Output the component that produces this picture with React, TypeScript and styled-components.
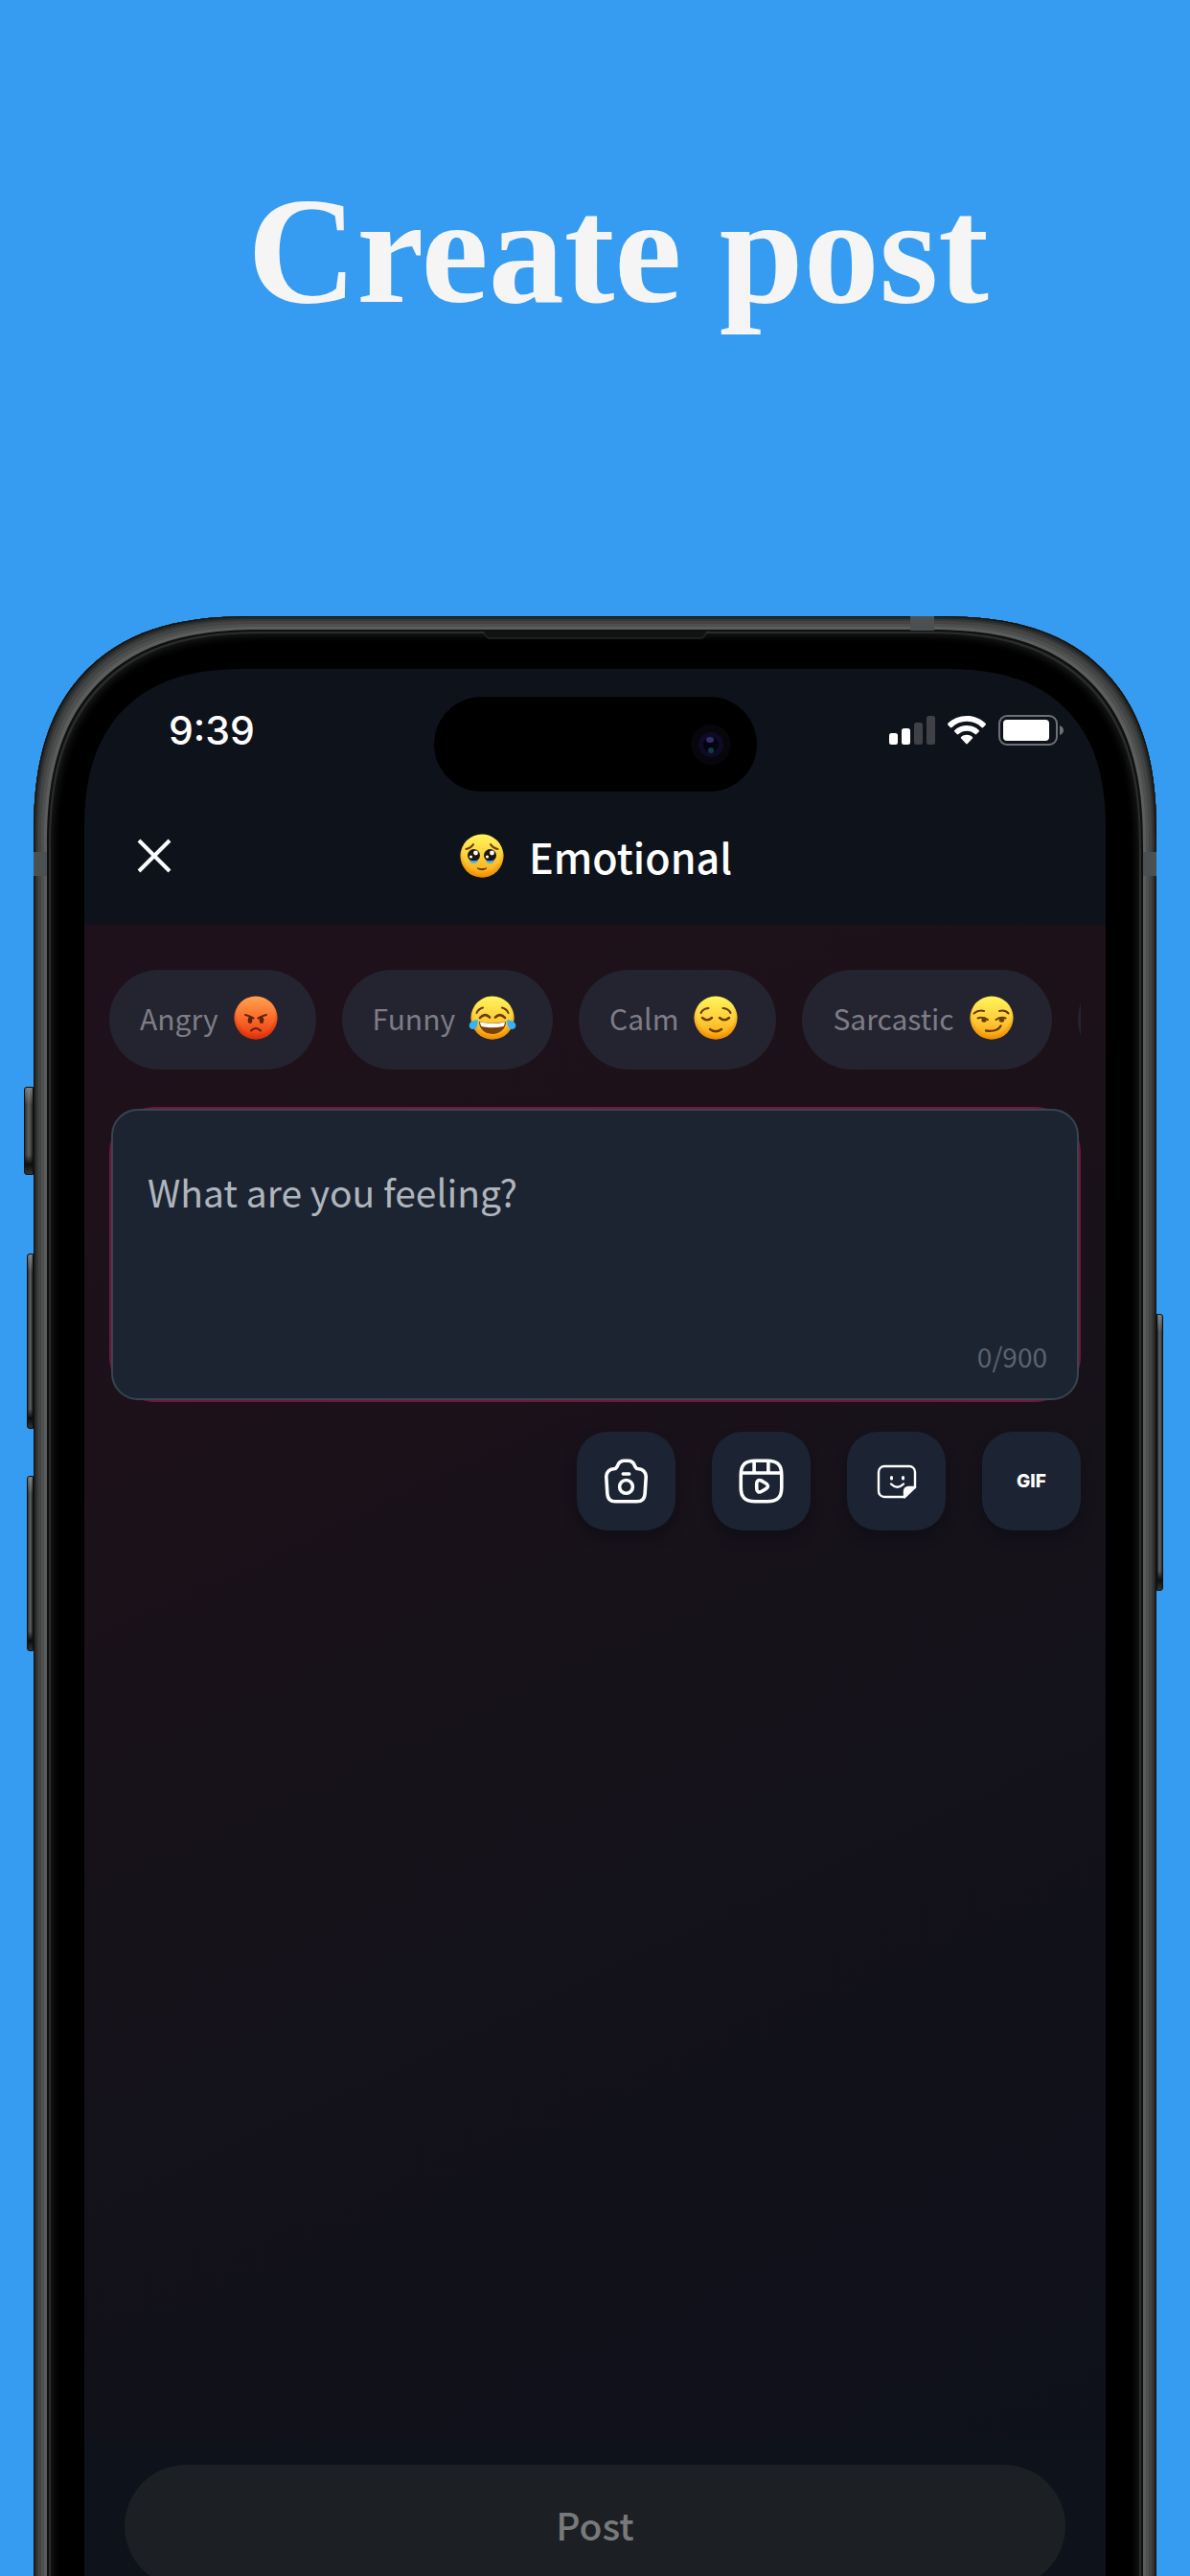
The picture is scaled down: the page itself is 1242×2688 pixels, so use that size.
import React, { useState } from "react";
import styled, { createGlobalStyle } from "styled-components";

const appFont = `"Noto Sans CJK SC", "Noto Sans", sans-serif`;

const GlobalStyle = createGlobalStyle`
  * { box-sizing: border-box; }
  body { margin: 0; background: #359cf1; }
  button, textarea { font: inherit; border: 0; margin: 0; padding: 0; background: none; }
  svg { display: block; flex: none; }
`;

const Stage = styled.main`
  display: flex;
  flex-direction: column;
  height: 100vh;
  overflow: hidden;
  background: #359cf1;
  font-family: ${appFont};
`;

const Banner = styled.header`
  flex: none;
  height: 643px;
  padding: 166px 0 0 48px;
`;

const BannerTitle = styled.h1`
  margin: 0;
  text-align: center;
  font: 700 158px/192px "Liberation Serif", "Times New Roman", serif;
  color: #f5f5f5;
`;

const Device = styled.section`
  position: relative;
  flex: 1;
  display: flex;
  min-height: 0;
  margin: 0 35px;
  padding: 55px 53px 0;
  border-radius: 190px 190px 0 0;
  background: #000;
  @supports (corner-shape: squircle) {
    border-radius: 230px 230px 0 0;
    corner-shape: superellipse(1.32);
  }
`;

/* Brushed metal edge: nested rings that follow the rounded corners. */
const MetalEdge = styled.span`
  position: absolute;
  inset: 0 0 -40px;
  border-radius: 190px 190px 0 0;
  @supports (corner-shape: squircle) {
    border-radius: 230px 230px 0 0;
    corner-shape: superellipse(1.32);
  }
  pointer-events: none;
  box-shadow:
    inset 0 0 0 1px #101212,
    inset 0 0 0 3px #262828,
    inset 0 0 0 5px #363838,
    inset 0 0 0 8px #434545,
    inset 0 0 0 11px #4e5050,
    inset 0 0 0 14px #5b5d5d,
    inset 0 0 0 16px #0e1010,
    inset 0 0 0 18px #2a2c2b,
    inset 0 0 8px 20px #1b1c1c;
`;

const SideKey = styled.span<{ $side: "left" | "right"; $top: number; $height: number; $depth: number }>`
  position: absolute;
  top: ${(p) => p.$top}px;
  ${(p) => p.$side}: ${(p) => -p.$depth}px;
  width: ${(p) => p.$depth}px;
  height: ${(p) => p.$height}px;
  border: 1px solid #0d0f10;
  border-radius: ${(p) => (p.$side === "left" ? "3px 0 0 3px" : "0 3px 3px 0")};
  background:
    linear-gradient(180deg, rgba(160, 160, 160, 0.6) 0, transparent 18px, transparent calc(100% - 20px), #0c0d0d calc(100% - 10px), #333 100%),
    linear-gradient(90deg, #2c2f2f, #5c6060 50%, #2a2c2c);
`;

const AntennaBand = styled.span<{ $edge: "left" | "right" | "top" }>`
  position: absolute;
  background: #4b5052;
  ${(p) =>
    p.$edge === "top"
      ? "top: 0; right: 232px; width: 25px; height: 15px;"
      : `top: 246px; ${p.$edge}: 0; width: 14px; height: 25px;`}
`;

const Earpiece = styled.svg`
  position: absolute;
  top: 15px;
  left: 50%;
  transform: translateX(-50%);
`;

const Screen = styled.div`
  flex: 1;
  min-width: 0;
  display: flex;
  flex-direction: column;
  overflow: hidden;
  border-radius: 146px 146px 0 0;
  background: #0e131b;
  @supports (corner-shape: squircle) {
    border-radius: 170px 170px 0 0;
    corner-shape: superellipse(1.3);
  }
`;

const StatusBar = styled.div`
  flex: none;
  display: grid;
  grid-template-columns: 1fr 337px 1fr;
  align-items: center;
  height: 128px;
`;

const Clock = styled.time`
  padding-left: 88px;
  font: 500 41px/48px Inter, sans-serif;
  color: #fff;
`;

const Island = styled.div`
  align-self: end;
  display: flex;
  align-items: center;
  justify-content: flex-end;
  height: 99px;
  padding-right: 26px;
  border-radius: 50px;
  background: #000;
`;

const StatusIcons = styled.div`
  display: flex;
  justify-content: flex-end;
  align-items: center;
  gap: 13px;
  padding-right: 44px;
`;

const NavBar = styled.div`
  flex: none;
  display: grid;
  grid-template-columns: 1fr auto 1fr;
  align-items: center;
  padding: 35px 52px 40px;
`;

const CloseButton = styled.button`
  display: flex;
  width: 42px;
  height: 42px;
  cursor: pointer;
`;

const NavTitle = styled.h2`
  display: flex;
  align-items: center;
  gap: 24px;
  margin: 0;
  font-size: 43px;
  line-height: 64px;
  font-weight: 500;
  color: #fff;
`;

const Composer = styled.form`
  flex: 1;
  min-height: 0;
  display: flex;
  flex-direction: column;
`;

const ComposerBody = styled.div`
  flex: 1;
  min-height: 0;
  padding: 47px 26px 0;
  background: linear-gradient(155deg, #1f111b 0%, #1c1119 28%, #16121a 50%, #11111a 75%, #0f111a 100%);
`;

const Moods = styled.div`
  display: flex;
  gap: 27px;
  overflow: hidden;
`;

const MoodChip = styled.button`
  flex: none;
  display: flex;
  align-items: center;
  gap: 14px;
  min-width: 104px;
  height: 104px;
  padding: 0 38px 4px 32px;
  border-radius: 52px;
  background: #232430;
  font-size: 30px;
  line-height: 44px;
  font-weight: 400;
  color: #7e7c86;
  cursor: pointer;
`;

const FieldGlow = styled.div`
  margin-top: 39px;
  padding: 2px;
  border-radius: 48px;
  background: #741539;
`;

const Field = styled.div`
  display: flex;
  flex-direction: column;
  padding: 56px 31px 24px 36px;
  border: 2px solid #36454f;
  border-radius: 28px;
  background: #1c2432;
`;

const FieldInput = styled.textarea`
  display: block;
  width: 100%;
  height: 180px;
  resize: none;
  outline: 0;
  font-size: 39px;
  line-height: 56px;
  font-weight: 400;
  color: #fff;
  &::placeholder { color: #afb5bd; opacity: 1; }
`;

const Counter = styled.output`
  align-self: flex-end;
  font-size: 28px;
  line-height: 40px;
  font-weight: 400;
  color: #5b636e;
`;

const Tools = styled.div`
  display: flex;
  justify-content: flex-end;
  gap: 38px;
  margin-top: 31px;
`;

const ToolButton = styled.button`
  display: flex;
  align-items: center;
  justify-content: center;
  width: 103px;
  height: 103px;
  border-radius: 32px;
  background: #1c2332;
  box-shadow: 0 8px 14px rgba(4, 8, 16, 0.35);
  font: 800 19px/24px Inter, sans-serif;
  color: #fff;
  cursor: pointer;
`;

const Footer = styled.div`
  flex: none;
  height: 143px;
  padding: 27px 42px 0;
  overflow: hidden;
  background: #0e121a;
`;

const PostButton = styled.button`
  width: 100%;
  height: 128px;
  padding-bottom: 4px;
  border-radius: 64px;
  background: #1c1f23;
  font-size: 39px;
  line-height: 56px;
  font-weight: 500;
  color: #77797b;
`;

type Mood = "emotional" | "angry" | "funny" | "calm" | "sarcastic";

const brown = "#6b3a06";

function EmojiFeatures({ mood }: { mood: Mood }) {
  const line = { fill: "none", stroke: brown, strokeWidth: 2, strokeLinecap: "round" as const };
  switch (mood) {
    case "emotional":
      return (
        <>
          <path d="M8.500 18c3.500-.8 6-2.500 7.500-5M41.500 18c-3.500-.8-6-2.500-7.500-5" {...line} />
          <circle cx="16.500" cy="24.500" r="6.500" fill="#1f1412" />
          <circle cx="33.500" cy="24.500" r="6.500" fill="#1f1412" />
          <path d="M11.500 29.500q5 1.500 10 0-1.500 3.500-5 3.500t-5-3.500ZM28.500 29.500q5 1.500 10 0-1.500 3.500-5 3.500t-5-3.500Z" fill="#49b4f0" />
          <circle cx="18.500" cy="22" r="2.400" fill="#fff" />
          <circle cx="35.500" cy="22" r="2.400" fill="#fff" />
          <circle cx="13.500" cy="26" r="1.600" fill="#fff" />
          <circle cx="30.500" cy="26" r="1.600" fill="#fff" />
          <path d="M20 38q5 3.500 10 0-5 1.500-10 0Z" fill={brown} stroke={brown} strokeLinejoin="round" />
        </>
      );
    case "angry":
      return (
        <>
          <path d="M14 22q3 .5 8.500 3.500M36 22q-3 .5-8.500 3.500" {...line} stroke="#5a2208" />
          <ellipse cx="19" cy="27.500" rx="2.300" ry="3.500" fill="#5a2208" />
          <ellipse cx="31" cy="27.500" rx="2.300" ry="3.500" fill="#5a2208" />
          <path d="M20 38.500q5-5 10 0" {...line} stroke="#5a2208" />
        </>
      );
    case "funny":
      return (
        <>
          <path d="M8.500 20q1.500-4 6.500-5.500M41.500 20q-1.500-4-6.500-5.500" {...line} />
          <path d="M12 25q5-5.500 10-.5M28 24.500q5-5 10 .5" {...line} strokeWidth={2.6} />
          <path d="M11 29q14 3.500 28 0c0 7.500-6 13-14 13s-14-5.500-14-13Z" fill="#7a4004" />
          <path d="M12 29.500q13 3 26 0-.3 3.500-1.500 4.500-11.500 2.500-23 0-1.200-1-1.500-4.500Z" fill="#fff" />
          <path d="M9.500 27c.8 5-.8 10-5 10-3 0-4.500-3-3.500-5.500 1.200-3 4.500-3.500 8.500-4.500Z" fill="#35b3f4" />
          <path d="M40.500 27c-.8 5 .8 10 5 10 3 0 4.500-3 3.500-5.500-1.200-3-4.500-3.500-8.500-4.500Z" fill="#35b3f4" />
        </>
      );
    case "calm":
      return (
        <>
          <path d="M9.500 20q2-4.500 8-5M40.500 20q-2-4.500-8-5" {...line} />
          <path d="M11 25q5 4.500 10 0M29 25q5 4.500 10 0" {...line} strokeWidth={2.4} />
          <path d="M19 37q6 4.500 12 0" {...line} strokeWidth={2.4} />
        </>
      );
    default:
      return (
        <>
          <path d="M6.500 20.500q4.500-4 10.500-2.500M33 18q6-1.500 9.500 2.500" {...line} />
          <path d="M10.500 25.500q5-2 10.500 1.500M29.500 27q5.500-3.500 10-1.500" {...line} />
          <ellipse cx="17" cy="27.500" rx="2.700" ry="2.200" fill={brown} />
          <ellipse cx="35.500" cy="27.500" rx="2.700" ry="2.200" fill={brown} />
          <path d="M19 38.500c7 1 13-.5 15.500-5" {...line} strokeWidth={2.4} />
        </>
      );
  }
}

function Emoji({ mood }: { mood: Mood }) {
  const red = mood === "angry";
  return (
    <svg width="50" height="50" viewBox="0 0 50 50" aria-hidden="true">
      <defs>
        <linearGradient id={`tone-${mood}`} x1="0" y1="0" x2="0" y2="1">
          <stop offset="0" stopColor={red ? "#ffa350" : "#fff45c"} />
          <stop offset="0.5" stopColor={red ? "#fb6c2c" : "#ffd13c"} />
          <stop offset="1" stopColor={red ? "#e8360d" : "#fba30c"} />
        </linearGradient>
        <radialGradient id={`rim-${mood}`} cx="0.5" cy="0.42" r="0.58">
          <stop offset="0.75" stopColor={red ? "#d22f05" : "#ec8500"} stopOpacity="0" />
          <stop offset="1" stopColor={red ? "#d22f05" : "#ec8500"} stopOpacity="0.8" />
        </radialGradient>
      </defs>
      <circle cx="25" cy="25" r="22.500" fill={`url(#tone-${mood})`} />
      <circle cx="25" cy="25" r="22.500" fill={`url(#rim-${mood})`} />
      <EmojiFeatures mood={mood} />
    </svg>
  );
}

const CameraIcon = () => (
  <svg width="51" height="51" viewBox="0 0 24 24" fill="none" stroke="#fff" strokeWidth="1.700" strokeLinecap="round" strokeLinejoin="round">
    <path d="M6.760 22h10.480c2.760 0 3.860-1.690 3.990-3.750l.52-8.260A3.753 3.753 0 0 0 18 6c-.61 0-1.170-.35-1.450-.89l-.72-1.450C15.370 2.750 14.170 2 13.150 2h-2.290c-1.030 0-2.230.75-2.690 1.660l-.72 1.450C7.170 5.650 6.610 6 6 6 3.830 6 2.110 7.830 2.250 9.990l.52 8.260C2.890 20.310 4 22 6.760 22ZM10.500 8.500h3" />
    <path d="M12 18a3.250 3.250 0 1 0 0-6.500 3.250 3.250 0 0 0 0 6.500Z" />
  </svg>
);

const ReelIcon = () => (
  <svg width="51" height="51" viewBox="0 0 24 24" fill="none" stroke="#fff" strokeWidth="1.700" strokeLinecap="round" strokeLinejoin="round">
    <path d="M22 15V9c0-5-2-7-7-7H9C4 2 2 4 2 9v6c0 5 2 7 7 7h6c5 0 7-2 7-7ZM2.520 8h18.960M8.520 2.110V8M15.480 2.110V8" />
    <path d="M9.750 14.450v-1.200c0-1.540 1.090-2.170 2.420-1.400l1.040.6 1.040.6c1.330.77 1.330 2.030 0 2.800l-1.040.6-1.040.6c-1.330.77-2.420.14-2.420-1.400v-.6Z" />
  </svg>
);

const StickerIcon = () => (
  <svg width="42" height="36" viewBox="0 0 42 36" fill="none" stroke="#fff" strokeWidth="2.400" strokeLinecap="round" strokeLinejoin="round">
    <path d="M28 34H8a6 6 0 0 1-6-6V8a6 6 0 0 1 6-6h26a6 6 0 0 1 6 6v16" />
    <path d="M40 24 29 34.500V28a4 4 0 0 1 4-4Z" fill="#fff" />
    <path d="M15.500 13.500v1.500M27.500 13.500v1.500" strokeWidth="3" />
    <path d="M15 20.500q6.500 6.500 13 0" />
  </svg>
);

const chips: { mood: Mood; label: string }[] = [
  { mood: "angry", label: "Angry" },
  { mood: "funny", label: "Funny" },
  { mood: "calm", label: "Calm" },
  { mood: "sarcastic", label: "Sarcastic" },
];

export default function App() {
  const [text, setText] = useState("");

  return (
    <Stage>
      <GlobalStyle />
      <Banner>
        <BannerTitle>Create post</BannerTitle>
      </Banner>
      <Device>
        <SideKey $side="left" $top={491} $height={92} $depth={10} />
        <SideKey $side="left" $top={665} $height={183} $depth={7} />
        <SideKey $side="left" $top={897} $height={183} $depth={7} />
        <SideKey $side="right" $top={728} $height={289} $depth={7} />
        <MetalEdge />
        <AntennaBand $edge="left" />
        <AntennaBand $edge="right" />
        <AntennaBand $edge="top" />
        <Earpiece width="238" height="10" viewBox="0 0 238 10" aria-hidden="true">
          <path d="M0 0h238q-3 1-4 4t-4 4H8q-3 0-4-4T0 0Z" fill="#111212" />
          <path d="M0 1q3 0 4 3t4 4h222q3 0 4-4t4-3" fill="none" stroke="#303232" />
        </Earpiece>
        <Screen>
          <StatusBar>
            <Clock>9:39</Clock>
            <Island>
              <svg width="44" height="44" viewBox="0 0 44 44" aria-hidden="true">
                <circle cx="22" cy="22" r="21" fill="#07060a" />
                <circle cx="22" cy="22" r="13" fill="#0e0b26" />
                <circle cx="22" cy="22" r="8" fill="#040410" />
                <ellipse cx="21" cy="17" rx="4" ry="3" fill="#33306f" />
                <ellipse cx="22" cy="28" rx="3" ry="3" fill="#0f3b42" />
              </svg>
            </Island>
            <StatusIcons>
              <svg width="48" height="30" viewBox="0 0 48 30" aria-hidden="true">
                <rect x="0" y="18" width="9" height="12" rx="2.500" fill="#fff" />
                <rect x="13" y="13" width="9" height="17" rx="2.500" fill="#fff" />
                <rect x="26" y="7" width="9" height="23" rx="2.500" fill="#3f4147" />
                <rect x="39" y="0" width="9" height="30" rx="2.500" fill="#3f4147" />
              </svg>
              <svg width="40" height="30" viewBox="0 0 40 30" aria-hidden="true">
                <path d="M20 0c7.700 0 14.500 3 19.600 7.800.5.500.5 1.200 0 1.700l-2.400 2.500c-.5.500-1.200.5-1.700 0A22.500 22.500 0 0 0 20 5.800 22.500 22.500 0 0 0 4.500 12c-.5.5-1.200.5-1.700 0L.4 9.500c-.5-.5-.5-1.200 0-1.700C5.500 3 12.300 0 20 0Z" fill="#fff" />
                <path d="M20 10c4.900 0 9.300 1.800 12.700 4.900.5.500.5 1.200 0 1.700l-2.500 2.500c-.5.500-1.100.5-1.600 0a12.700 12.700 0 0 0-17.200 0c-.5.500-1.100.5-1.600 0l-2.500-2.500c-.5-.5-.5-1.200 0-1.700C10.700 11.800 15.100 10 20 10Z" fill="#fff" />
                <path d="M20 19.700c2.300 0 4.300.8 5.900 2.200.5.500.5 1.200 0 1.600l-5.100 5.600c-.5.500-1.100.5-1.600 0l-5.100-5.600c-.5-.4-.5-1.100 0-1.600 1.600-1.400 3.600-2.200 5.900-2.200Z" fill="#fff" />
              </svg>
              <svg width="68" height="32" viewBox="0 0 68 32" aria-hidden="true">
                <rect x="1" y="1" width="60" height="30" rx="8" fill="none" stroke="#6e7075" strokeWidth="2" />
                <rect x="5" y="5" width="48" height="22" rx="4" fill="#fff" />
                <path d="M64 11q4 1.500 4 5t-4 5Z" fill="#6e7075" />
              </svg>
            </StatusIcons>
          </StatusBar>
          <NavBar>
            <CloseButton type="button" aria-label="Close">
              <svg width="42" height="42" viewBox="0 0 42 42" fill="none" stroke="#fff" strokeWidth="4">
                <path d="M5 5l32 32M37 5 5 37" />
              </svg>
            </CloseButton>
            <NavTitle>
              <Emoji mood="emotional" />
              Emotional
            </NavTitle>
          </NavBar>
          <Composer onSubmit={(e) => e.preventDefault()}>
            <ComposerBody>
              <Moods>
                {chips.map(({ mood, label }) => (
                  <MoodChip key={mood} type="button">
                    {label}
                    <Emoji mood={mood} />
                  </MoodChip>
                ))}
                <MoodChip as="span" aria-hidden="true" />
              </Moods>
              <FieldGlow>
                <Field>
                  <FieldInput
                    aria-label="What are you feeling?"
                    placeholder="What are you feeling?"
                    maxLength={900}
                    value={text}
                    onChange={(e) => setText(e.target.value)}
                  />
                  <Counter>{text.length}/900</Counter>
                </Field>
              </FieldGlow>
              <Tools>
                <ToolButton type="button" aria-label="Add photo"><CameraIcon /></ToolButton>
                <ToolButton type="button" aria-label="Add video"><ReelIcon /></ToolButton>
                <ToolButton type="button" aria-label="Add sticker"><StickerIcon /></ToolButton>
                <ToolButton type="button">GIF</ToolButton>
              </Tools>
            </ComposerBody>
            <Footer>
              <PostButton type="submit">Post</PostButton>
            </Footer>
          </Composer>
        </Screen>
      </Device>
    </Stage>
  );
}
